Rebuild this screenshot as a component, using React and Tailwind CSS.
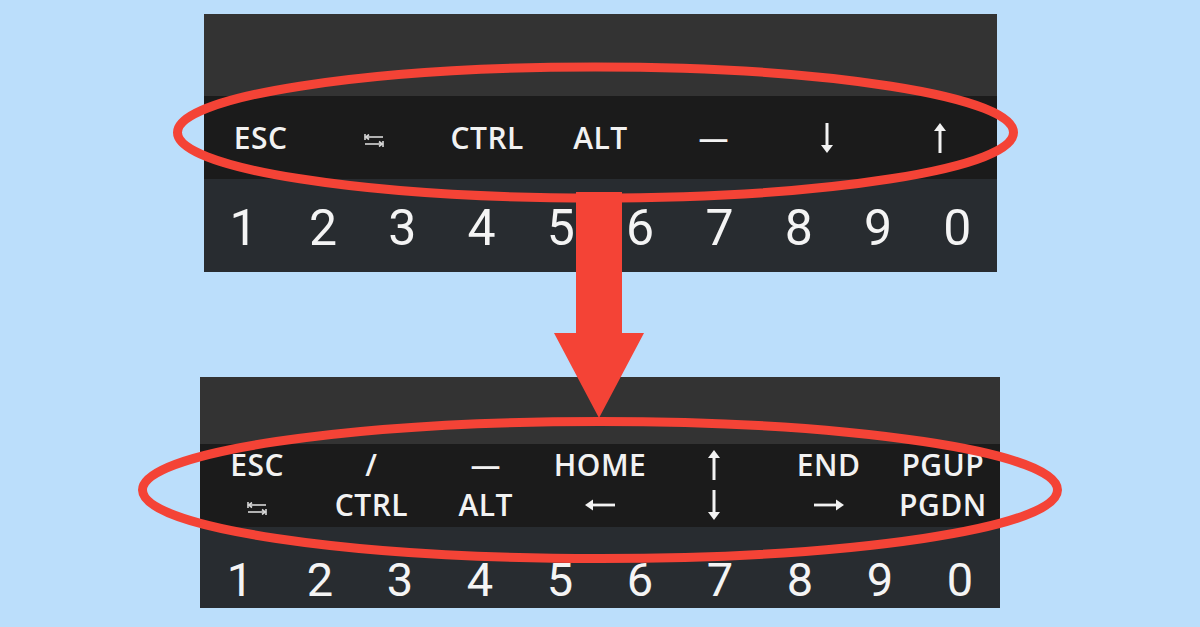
import React from "react";

const FONT = { fontFamily: '"Open Sans", "Noto Sans", sans-serif' };
const NUM = { fontFamily: 'Roboto, "Noto Sans", sans-serif' };

function TabIcon() {
  return (
    <svg width="20" height="13" viewBox="0 0 20 13" fill="none" stroke="#d8d8d8" strokeWidth="1.6">
      <line x1="1" y1="0" x2="1" y2="6" />
      <line x1="1.5" y1="3" x2="19" y2="3" />
      <path d="M5 0.5 L1.8 3 L5 5.5" />
      <line x1="19" y1="7" x2="19" y2="13" />
      <line x1="1" y1="10" x2="18.5" y2="10" />
      <path d="M15 7.5 L18.2 10 L15 12.5" />
    </svg>
  );
}

function VArrow({ up }) {
  return (
    <svg width="16" height="30" viewBox="0 0 16 30" fill="#f2f2f2">
      {up ? (
        <>
          <rect x="6.5" y="6" width="3" height="24" />
          <path d="M8 0 L14 8 L2 8 Z" />
        </>
      ) : (
        <>
          <rect x="6.5" y="0" width="3" height="24" />
          <path d="M8 30 L14 22 L2 22 Z" />
        </>
      )}
    </svg>
  );
}

function HArrow({ right }) {
  return (
    <svg width="30" height="14" viewBox="0 0 30 14" fill="#f2f2f2">
      {right ? (
        <>
          <rect x="0" y="5.6" width="24" height="2.8" />
          <path d="M30 7 L22 1.5 L22 12.5 Z" />
        </>
      ) : (
        <>
          <rect x="6" y="5.6" width="24" height="2.8" />
          <path d="M0 7 L8 1.5 L8 12.5 Z" />
        </>
      )}
    </svg>
  );
}

function Key({ children }) {
  return (
    <div className="flex items-center justify-center text-[30px] font-semibold text-[#f2f2f2] leading-none tracking-[0.5px]" style={FONT}>
      {children}
    </div>
  );
}

function Digits({ pt, h, size }) {
  return (
    <div className={`grid grid-cols-10 bg-[#282c30] ${h} ${pt}`}>
      {["1", "2", "3", "4", "5", "6", "7", "8", "9", "0"].map((d) => (
        <div key={d} className={`flex justify-center text-[#f4f4f4] leading-none ${size}`} style={NUM}>
          {d}
        </div>
      ))}
    </div>
  );
}

export default function App() {
  return (
    <div className="relative w-[1200px] h-[627px] bg-[#bbdefb] overflow-hidden flex flex-col">
      {/* Top panel */}
      <div className="ml-[204px] mt-[14px] w-[793px] flex flex-col">
        <div className="h-[82px] bg-[#333333]" />
        <div className="h-[83px] bg-[#1b1b1b] grid grid-cols-7 items-center">
          <Key>ESC</Key>
          <Key><span className="pt-[6px]"><TabIcon /></span></Key>
          <Key>CTRL</Key>
          <Key>ALT</Key>
          <Key>—</Key>
          <Key><VArrow /></Key>
          <Key><VArrow up /></Key>
        </div>
        <Digits h="h-[93px]" pt="pt-[24px]" size="text-[50px]" />
      </div>

      {/* Bottom panel */}
      <div className="ml-[200px] mt-[105px] w-[800px] flex flex-col">
        <div className="h-[67px] bg-[#333333]" />
        <div className="h-[83px] bg-[#1b1b1b] grid grid-cols-7 grid-rows-2 pt-[1px] pb-[2px]">
          <Key>ESC</Key>
          <Key>/</Key>
          <Key>—</Key>
          <Key>HOME</Key>
          <Key><VArrow up /></Key>
          <Key>END</Key>
          <Key>PGUP</Key>
          <Key><span className="pt-[6px]"><TabIcon /></span></Key>
          <Key>CTRL</Key>
          <Key>ALT</Key>
          <Key><HArrow /></Key>
          <Key><VArrow /></Key>
          <Key><HArrow right /></Key>
          <Key>PGDN</Key>
        </div>
        <Digits h="h-[81px]" pt="pt-[29px]" size="text-[47px]" />
      </div>

      {/* Annotation overlay */}
      <svg className="absolute inset-0 pointer-events-none" width="1200" height="627" viewBox="0 0 1200 627">
        <ellipse cx="595.5" cy="132.5" rx="418" ry="65.5" fill="none" stroke="#f44336" strokeWidth="9" />
        <ellipse cx="600" cy="490" rx="457.5" ry="68.5" fill="none" stroke="#f44336" strokeWidth="9" />
        <path d="M576 192 L622 192 L622 333 L644 333 L599 418 L554 333 L576 333 Z" fill="#f44336" />
      </svg>
    </div>
  );
}
